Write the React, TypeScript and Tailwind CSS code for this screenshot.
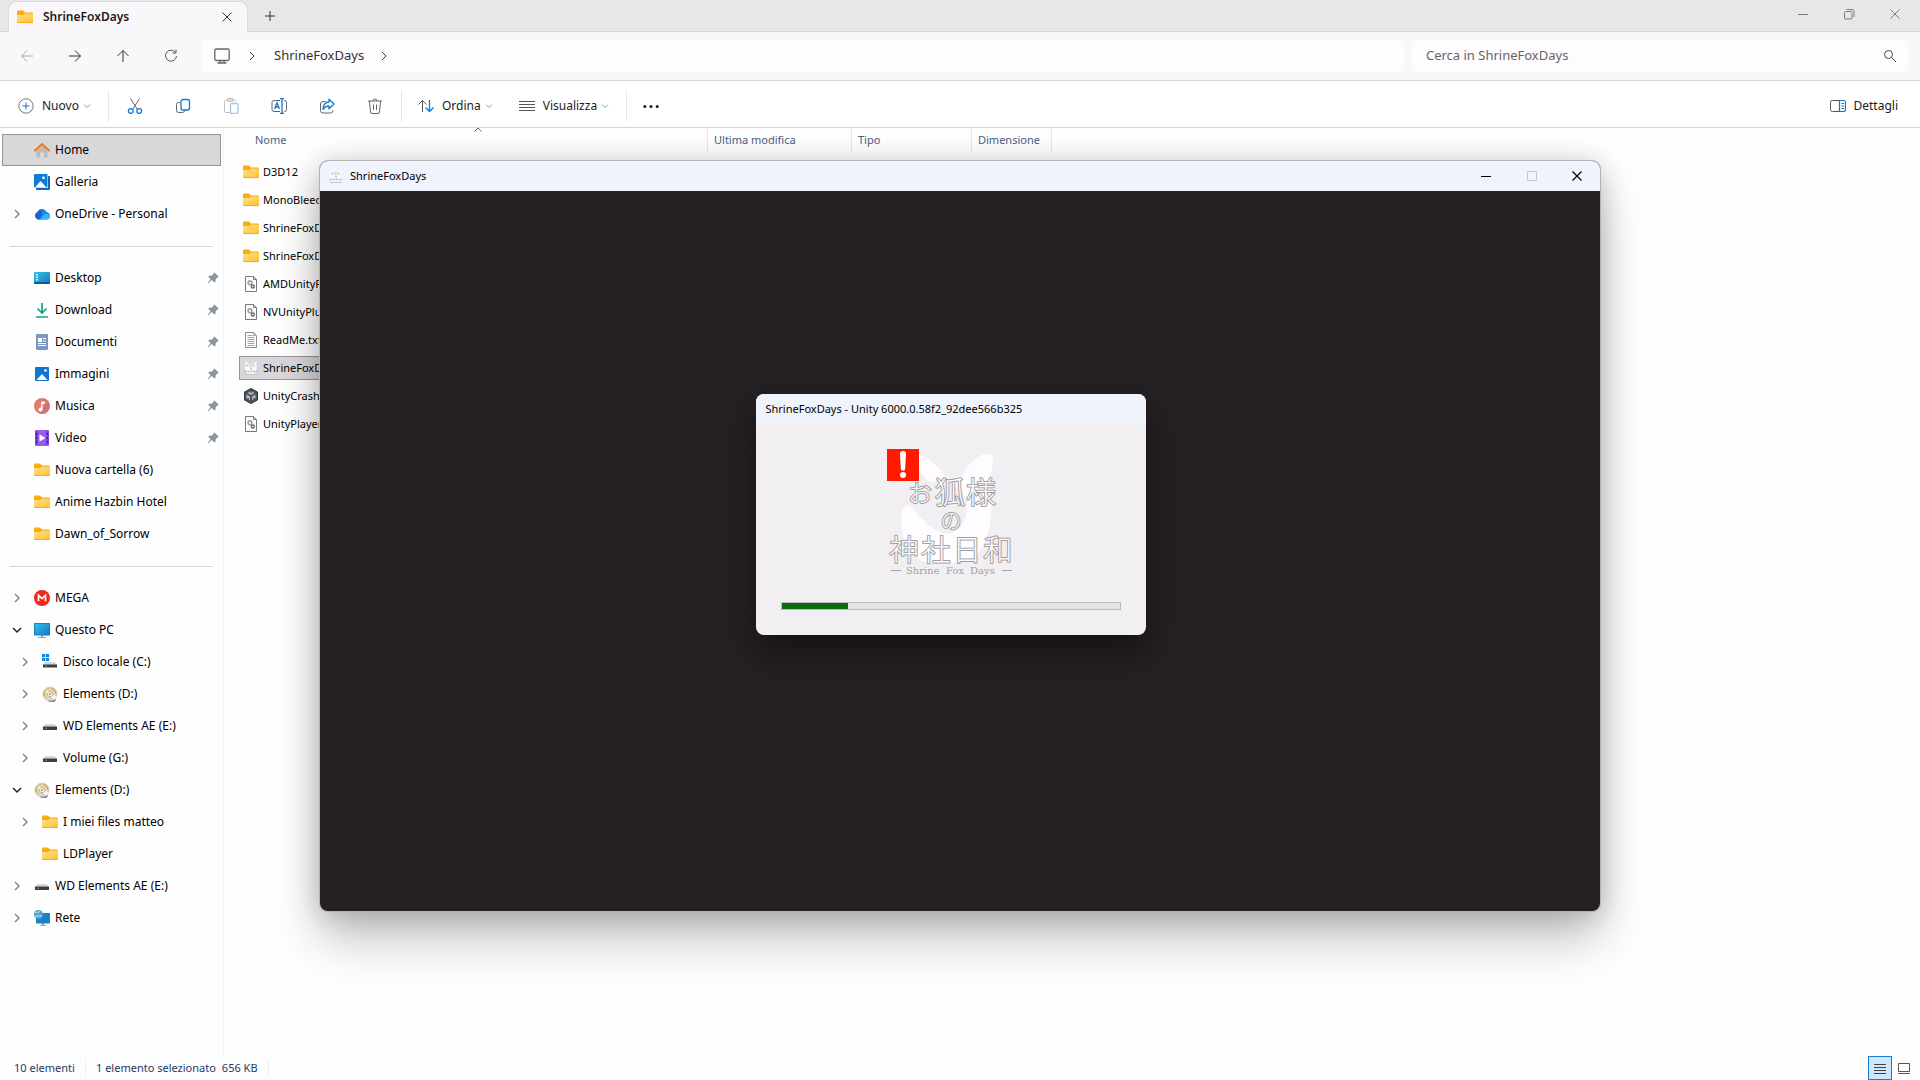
import { useState, type ReactNode } from "react";

type IconName =
  | "home" | "gallery" | "cloud" | "desktop" | "download" | "docs" | "pictures"
  | "music" | "video" | "folder" | "mega" | "pc" | "osdisk" | "disc" | "drive"
  | "network" | "dll" | "txt" | "fox" | "unity";

type NavItem = {
  label: string;
  icon: IconName;
  pinned?: boolean;
  arrow?: "right" | "down";
  nested?: boolean;
};

const navGroups: NavItem[][] = [
  [
    { label: "Home", icon: "home" },
    { label: "Galleria", icon: "gallery" },
    { label: "OneDrive - Personal", icon: "cloud", arrow: "right" },
  ],
  [
    { label: "Desktop", icon: "desktop", pinned: true },
    { label: "Download", icon: "download", pinned: true },
    { label: "Documenti", icon: "docs", pinned: true },
    { label: "Immagini", icon: "pictures", pinned: true },
    { label: "Musica", icon: "music", pinned: true },
    { label: "Video", icon: "video", pinned: true },
    { label: "Nuova cartella (6)", icon: "folder" },
    { label: "Anime Hazbin Hotel", icon: "folder" },
    { label: "Dawn_of_Sorrow", icon: "folder" },
  ],
  [
    { label: "MEGA", icon: "mega", arrow: "right" },
    { label: "Questo PC", icon: "pc", arrow: "down" },
    { label: "Disco locale (C:)", icon: "osdisk", arrow: "right", nested: true },
    { label: "Elements (D:)", icon: "disc", arrow: "right", nested: true },
    { label: "WD Elements AE (E:)", icon: "drive", arrow: "right", nested: true },
    { label: "Volume (G:)", icon: "drive", arrow: "right", nested: true },
    { label: "Elements (D:)", icon: "disc", arrow: "down" },
    { label: "I miei files matteo", icon: "folder", arrow: "right", nested: true },
    { label: "LDPlayer", icon: "folder", nested: true },
    { label: "WD Elements AE (E:)", icon: "drive", arrow: "right" },
    { label: "Rete", icon: "network", arrow: "right" },
  ],
];

const files: { name: string; icon: IconName }[] = [
  { name: "D3D12", icon: "folder" },
  { name: "MonoBleedingEdge", icon: "folder" },
  { name: "ShrineFoxDays_Burst", icon: "folder" },
  { name: "ShrineFoxDays_Data", icon: "folder" },
  { name: "AMDUnityPlugin.dll", icon: "dll" },
  { name: "NVUnityPlugin.dll", icon: "dll" },
  { name: "ReadMe.txt", icon: "txt" },
  { name: "ShrineFoxDays.exe", icon: "fox" },
  { name: "UnityCrashHandler64.exe", icon: "unity" },
  { name: "UnityPlayer.dll", icon: "dll" },
];

const glyphs: Record<IconName, ReactNode> = {
  home: (
    <>
      <path d="M2.500 7.500 8 2.500l5.500 5v7a1 1 0 0 1-1 1H10v-5H6v5H3.500a1 1 0 0 1-1-1z" fill="#bdbbbd" />
      <path d="M1 8.500 8 2l7 6.500" fill="none" stroke="#f07a1c" strokeWidth="2" strokeLinecap="round" strokeLinejoin="round" />
    </>
  ),
  gallery: (
    <>
      <path d="M14 2h1a1 1 0 0 1 1 1v12a1 1 0 0 1-1 1H3a1 1 0 0 1-1-1v-1h12z" fill="#1667b7" />
      <rect width="13.500" height="13.500" rx="1" fill="#0f7bd8" />
      <path d="M1 13.500 6.500 7l6 6.500z" fill="#fff" />
      <circle cx="9.500" cy="3.800" r="1.400" fill="#fff" />
    </>
  ),
  cloud: (
    <>
      <path d="M4 13.500A4 4 0 0 1 3.500 6 5 5 0 0 1 12.600 6a3.800 3.800 0 0 1 .2 7.500z" fill="#1a8cf0" />
      <path d="M4 13.500A4 4 0 0 1 3.500 6 5 5 0 0 1 8 3.200c1 3-1 5-1 10.300z" fill="#1663d6" />
      <path d="M5 13.500 11 8.500c2-1 5 0 5 2.300a2.800 2.800 0 0 1-3 2.700z" fill="#35b9f6" />
    </>
  ),
  desktop: (
    <>
      <rect y="2" width="16" height="12" rx="1" fill="url(#screenFill)" />
      <path d="M0 12h16v1a1 1 0 0 1-1 1H1a1 1 0 0 1-1-1z" fill="#0b5c92" />
      <path d="M2 4h2v1.500H2zM2 6.500h2V8H2zM2 9h2v1.500H2z" fill="#d5f3ff" />
    </>
  ),
  download: (
    <path d="M8 1v9.500M3.500 6.500 8 11l4.500-4.500M2 15h12" fill="none" stroke="#16a085" strokeWidth="1.700" />
  ),
  docs: (
    <>
      <rect x="2" width="12" height="16" rx="1" fill="#7b98c0" />
      <path d="M4 4h4v4H4z" fill="#fff" />
      <path d="M9 4.500h3M9 7h3M4 9.500h8M4 11.500h8" stroke="#fff" />
    </>
  ),
  pictures: (
    <>
      <rect x="1" y="1" width="14" height="14" rx="1" fill="#0f76d2" />
      <path d="M2.500 14 8 8l5.500 6z" fill="#fff" />
      <circle cx="11.500" cy="4.500" r="1.300" fill="#fff" />
    </>
  ),
  music: (
    <>
      <circle cx="8" cy="8" r="8" fill="#df7c66" />
      <path d="M14 3a8 8 0 0 1-9 12.500z" fill="#c06f8d" opacity=".6" />
      <path d="M7.200 3.500v6.200a2 2 0 1 0 1.400 1.900V6h2.200V3.500z" fill="#fff" />
    </>
  ),
  video: (
    <>
      <rect x="1" width="14" height="16" rx="1" fill="#9a5cf0" />
      <path d="M1 1h3v14H1zM12 1h3v14h-3z" fill="#7f3fe0" />
      <path d="M2 3h1.300v1.500H2zM2 7h1.300v1.500H2zM2 11h1.300v1.500H2zM12.700 3H14v1.500h-1.300zM12.700 7H14v1.500h-1.300zM12.700 11H14v1.500h-1.300z" fill="#3b1a78" />
      <path d="M5.500 4.500v7L11.500 8z" fill="#fff" />
    </>
  ),
  folder: (
    <>
      <path d="M0 2.500a1 1 0 0 1 1-1h5L8 3.500h7a1 1 0 0 1 1 1V7H0z" fill="#fbab0b" />
      <path d="M0 6h6.500L8 4.500h7a1 1 0 0 1 1 1V13a1 1 0 0 1-1 1H1a1 1 0 0 1-1-1z" fill="url(#folderFill)" />
      <path d="M.3 13.600h15.400" stroke="#eda313" strokeWidth=".8" />
    </>
  ),
  mega: (
    <>
      <circle cx="8" cy="8" r="8" fill="#f0251c" />
      <path d="M4.500 11.200V5.200L8 8.500l3.500-3.300v6" fill="none" stroke="#fff" strokeWidth="1.700" />
    </>
  ),
  pc: (
    <>
      <path d="M7 13h2v2.500H7z" fill="#9aa4ac" />
      <path d="M4 15.500h8" stroke="#9aa4ac" />
      <rect y="1" width="16" height="12.500" rx="1" fill="#1474b4" />
      <rect x=".8" y="1.800" width="14.400" height="11" fill="url(#screenFill)" />
    </>
  ),
  osdisk: (
    <>
      <path d="M3 8h10l2 3H1z" fill="#d8d8d8" />
      <path d="M1 10.500h14v3H1z" fill="#3d4043" />
      <circle cx="4" cy="12" r=".7" fill="#3ee05a" />
      <path d="M0 0h3.200v3.200H0zM3.900 0h3.200v3.200H3.900zM0 3.900h3.200v3.200H0zM3.900 3.900h3.200v3.200H3.900z" fill="#0f88e0" />
    </>
  ),
  disc: (
    <>
      <path d="M5 13h8l1 1.500-2 1.500H7z" fill="#85888b" />
      <circle cx="8" cy="8" r="7" fill="#d5d4d0" stroke="#b9b6ac" strokeWidth=".6" />
      <path d="M8 8 1.500 6a7 7 0 0 1 4-4.500zM8 8l6.500 2a7 7 0 0 1-3 4z" fill="#f8f8f5" />
      <path d="M2.500 10.500A6 6 0 0 1 7 2.500M9.500 2.500a6 6 0 0 1 4.500 5" fill="none" stroke="#e2b13a" strokeWidth="1.600" />
      <circle cx="8" cy="8" r="2.600" fill="#fff" stroke="#d3a63a" strokeWidth=".8" />
      <circle cx="8" cy="8" r="1.100" fill="#8c9096" />
    </>
  ),
  drive: (
    <>
      <path d="M3.500 6h9L15 9H1z" fill="#d8d8d8" />
      <path d="M1 8.500h14v3.500H1z" fill="#3d4043" />
      <circle cx="4" cy="10.300" r=".7" fill="#3ee05a" />
    </>
  ),
  network: (
    <>
      <path d="M8 13h2v2.500H8zM6 15h6v1H6z" fill="#9aa4ac" />
      <rect x="2" y="3" width="14" height="10.500" rx="1" fill="#1883c8" />
      <circle cx="4.500" cy="4.500" r="4.500" fill="#4ea4cd" />
      <path d="M1 3c2-2 3 1 5-2M1 6c3 1 4-1 7 0" stroke="#c9eaf5" fill="none" />
    </>
  ),
  dll: (
    <>
      <path d="M2.500.5h8l3 3v12h-11z" fill="#fff" stroke="#77797b" />
      <path d="M10.500.5v3h3" fill="none" stroke="#77797b" />
      <circle cx="7" cy="6.800" r="1.900" fill="none" stroke="#9aa0a8" strokeWidth="1.600" />
      <circle cx="9.800" cy="10.500" r="1.500" fill="none" stroke="#5d6d82" strokeWidth="1.400" />
    </>
  ),
  txt: (
    <>
      <path d="M2.500.5h8l3 3v12h-11z" fill="#fff" stroke="#8c8e90" />
      <path d="M10.500.5v3h3M4.500 3.500h5M4.500 5.500h7M4.500 7.500h7M4.500 9.500h7M4.500 11.500h7M4.500 13.500h7" fill="none" stroke="#a2a4a6" />
    </>
  ),
  fox: (
    <>
      <path d="M2.500 1 6 4h4l3.500-3v8L12 14H4L2 9z" fill="#f9f8fa" />
      <path d="M3.500 5.500h9M7 8.500h2M1.500 11.500h13" stroke="#bab8bd" strokeWidth="2" strokeDasharray="2 1" opacity=".8" />
      <path d="M2 14.500h12" stroke="#c6c4c8" />
    </>
  ),
  unity: (
    <>
      <path d="M8 .5 14.500 4v8L8 15.500 1.500 12V4z" fill="#4b505a" stroke="#33363e" />
      <path d="M8 3 11.500 5 8 7 4.500 5zM3.500 6.500 7 8.500v4l-3.500-2zM12.500 6.500 9 8.500v4l3.500-2z" fill="#b5bac3" />
      <path d="M8 2v3M5 10v2M11 10v2" stroke="#33363e" />
    </>
  ),
};

function Glyph({ name }: { name: IconName }) {
  return (
    <svg viewBox="0 0 16 16" className="size-4 shrink-0" aria-hidden="true">
      {glyphs[name]}
    </svg>
  );
}

function Line({ d, className = "", size = 16 }: { d: string; className?: string; size?: number }) {
  return (
    <svg
      viewBox="0 0 16 16"
      width={size}
      height={size}
      fill="none"
      stroke="currentColor"
      className={`shrink-0 ${className}`}
      aria-hidden="true"
    >
      <path d={d} />
    </svg>
  );
}

const CHEVRON_RIGHT = "M6 4l4 4-4 4";
const CLOSE = "M3.500 3.500l9 9M12.500 3.500l-9 9";

function TabBar() {
  return (
    <header className="flex h-8 items-stretch border-b border-[#d6d4d7] bg-[#e8e6e9]">
      <div className="z-10 -mb-px ml-2 mt-px flex w-60 items-center rounded-t-lg border border-b-0 border-[#dcdadd] bg-[#f9f7fa] pl-2 pr-3">
        <Glyph name="folder" />
        <span className="ml-2.5 flex-1 text-xs font-semibold text-[#1b1b1b]">ShrineFoxDays</span>
        <button aria-label="Chiudi scheda" className="text-[#333]">
          <Line d={CLOSE} />
        </button>
      </div>
      <button aria-label="Nuova scheda" className="ml-3.5 text-[#333]">
        <Line d="M8 3v10M3 8h10" />
      </button>
      <div className="ml-auto flex h-7 items-center pr-0.5 text-[#7d7b7e]">
        <button aria-label="Riduci a icona" className="flex w-[46px] justify-center">
          <Line d="M3 8.500h10" />
        </button>
        <button aria-label="Ripristina" className="flex w-[46px] justify-center">
          <svg viewBox="0 0 16 16" className="size-4" fill="none" stroke="currentColor">
            <rect x="3.500" y="5.500" width="7.500" height="7.500" rx="1" />
            <path d="M5.500 3.500h5.500a2 2 0 0 1 2 2v5.500" />
          </svg>
        </button>
        <button aria-label="Chiudi" className="flex w-[46px] justify-center">
          <Line d={CLOSE} />
        </button>
      </div>
    </header>
  );
}

function AddressRow() {
  return (
    <div className="flex h-[49px] items-center border-b border-[#d6d4d7] bg-[#f9f7fa] pr-3 text-[#333]">
      <nav className="flex w-[201px] shrink-0 items-center pl-[3px]">
        <button aria-label="Indietro" className="flex w-12 justify-center text-[#aaa8ab]">
          <Line d="M14 8H2.500M8 2.500 2.500 8 8 13.500" />
        </button>
        <button aria-label="Avanti" className="flex w-12 justify-center">
          <Line d="M2 8h11.500M8 2.500l5.500 5.500L8 13.500" />
        </button>
        <button aria-label="Su" className="flex w-12 justify-center">
          <Line d="M8 14V2.500M2.500 8 8 2.500l5.500 5.500" />
        </button>
        <button aria-label="Aggiorna" className="flex w-12 justify-center text-[#555]">
          <Line d="M12.500 4.500A5.500 5.500 0 1 0 13.500 8M13 1.500v3.500H9.500" />
        </button>
      </nav>
      <div className="flex h-8 min-w-0 flex-1 items-center rounded-md bg-[#fefcff] pl-[13px]">
        <svg viewBox="0 0 16 16" className="size-4" fill="none" stroke="#666" strokeWidth="1.300">
          <rect x=".8" y="1" width="14.400" height="11.500" rx="1.500" />
          <path d="M6 12.500v2M10 12.500v2M3.500 15h9" />
        </svg>
        <Line d={CHEVRON_RIGHT} className="mx-3.5" />
        <a href="#" className="text-[13px] text-[#333]">ShrineFoxDays</a>
        <Line d={CHEVRON_RIGHT} className="ml-3" />
      </div>
      <label className="ml-2 flex h-8 w-[26%] items-center rounded-md bg-[#fefcff] pl-3.5 pr-2.5">
        <input
          type="search"
          aria-label="Cerca in ShrineFoxDays"
          placeholder="Cerca in ShrineFoxDays"
          className="min-w-0 flex-1 bg-transparent text-[13px] outline-none placeholder:text-[#66646a]"
        />
        <Line d="M10.500 6.500a4 4 0 1 1-8 0 4 4 0 0 1 8 0M9.500 9.500l4.500 4.500" className="text-[#444]" />
      </label>
    </div>
  );
}

function Separator() {
  return <span className="h-8 w-px shrink-0 bg-[#e9e9e9]" />;
}

function IconButton({ label, children, faded }: { label: string; children: ReactNode; faded?: boolean }) {
  return (
    <button aria-label={label} disabled={faded} className={`flex w-12 justify-center ${faded ? "opacity-40" : ""}`}>
      <svg viewBox="0 0 16 16" className="size-4" fill="none" stroke="#666">
        {children}
      </svg>
    </button>
  );
}

function MenuButton({ label, children }: { label: string; children: ReactNode }) {
  return (
    <button className="flex items-center text-xs text-[#1b1b1b]">
      <svg viewBox="0 0 16 16" className="mr-2 size-4" fill="none" stroke="#555">
        {children}
      </svg>
      {label}
      <Line d="M5 6.500l3 3 3-3" className="text-[#999]" />
    </button>
  );
}

function CommandBar() {
  return (
    <div className="flex h-[47px] items-center border-b border-[#d6d4d7] bg-white pr-[22px] pt-[3px]">
      <div className="flex w-[108px] items-center pl-[18px]">
        <MenuButton label="Nuovo">
          <circle cx="8" cy="8" r="7.200" stroke="#777" />
          <path d="M8 4.500v7M4.500 8h7" stroke="#0f78d4" />
        </MenuButton>
      </div>
      <Separator />
      <div className="flex w-[292px] items-center pl-0.5">
        <IconButton label="Taglia">
          <path d="M3.500.5 10.500 11.500M12.500.5 5.500 11.500" />
          <circle cx="3.800" cy="13" r="2.400" stroke="#0f78d4" strokeWidth="1.300" />
          <circle cx="12.200" cy="13" r="2.400" stroke="#0f78d4" strokeWidth="1.300" />
        </IconButton>
        <IconButton label="Copia">
          <path d="M5 4.500H3.500a2 2 0 0 0-2 2v6a2 2 0 0 0 2 2h4a2 2 0 0 0 2-2" />
          <rect x="6" y="1.500" width="8.500" height="10.500" rx="2" stroke="#0f78d4" strokeWidth="1.300" />
        </IconButton>
        <IconButton label="Incolla" faded>
          <path d="M7 14.500H3a1.500 1.500 0 0 1-1.500-1.500V3.500A1.500 1.500 0 0 1 3 2h8.500A1.500 1.500 0 0 1 13 3.500M4.500.5h5.500v3H4.500z" />
          <rect x="7.500" y="5.500" width="7.500" height="10" rx="1" stroke="#0f78d4" strokeWidth="1.300" />
        </IconButton>
        <IconButton label="Rinomina">
          <path d="M9 2.500H3a2 2 0 0 0-2 2v7a2 2 0 0 0 2 2h6M13 2.500h.5a2 2 0 0 1 2 2v7a2 2 0 0 1-2 2H13" />
          <path d="M11 .5v15M9 .5h4M9 15.500h4M3.500 11 6 4.800 8.500 11M4.200 9h3.600" stroke="#0f78d4" strokeWidth="1.300" />
        </IconButton>
        <IconButton label="Condividi">
          <path d="M6.500 3.500H4a2.500 2.500 0 0 0-2.500 2.500v6.500A2.500 2.500 0 0 0 4 15h7.500a2.500 2.500 0 0 0 2.500-2.500V12" />
          <path d="M10 1.200 15 6l-5 4.700V8C7 8 5.500 9 4 11.500 4.200 7.500 6 4.200 10 4z" stroke="#0f78d4" strokeWidth="1.300" strokeLinejoin="round" />
        </IconButton>
        <IconButton label="Elimina">
          <path d="M1 3h14M6 3a2 2 0 0 1 4 0M2.500 3l1 11a1.500 1.500 0 0 0 1.500 1.500h6a1.500 1.500 0 0 0 1.500-1.500l1-11M6.500 6.500v5.500M9.500 6.500v5.500" />
        </IconButton>
      </div>
      <Separator />
      <div className="flex w-[224px] items-center gap-[22px] pl-4">
        <MenuButton label="Ordina">
          <path d="M4.500 14V2.500M.5 6.500l4-4 4 4" />
          <path d="M11.500 2v11.500M7.500 9.500l4 4 4-4" stroke="#0f78d4" strokeWidth="1.300" />
        </MenuButton>
        <MenuButton label="Visualizza">
          <path d="M0 3.500h16M0 6.500h16M0 9.500h16M0 12.500h16" />
        </MenuButton>
      </div>
      <Separator />
      <button aria-label="Altro" className="ml-4">
        <svg viewBox="0 0 16 16" className="size-4" fill="#1b1b1b">
          <circle cx="1.800" cy="8.500" r="1.500" />
          <circle cx="8" cy="8.500" r="1.500" />
          <circle cx="14.200" cy="8.500" r="1.500" />
        </svg>
      </button>
      <button className="ml-auto flex items-center gap-2 text-xs text-[#1b1b1b]">
        <svg viewBox="0 0 16 16" className="size-4" fill="none" stroke="#555">
          <path d="M9.500 2.500H2.500a2 2 0 0 0-2 2v7a2 2 0 0 0 2 2h7" />
          <path d="M9.500 2.500h4a2 2 0 0 1 2 2v7a2 2 0 0 1-2 2h-4zM11.500 5.500h2.500M11.500 8h2.500M11.500 10.500h2.500" stroke="#0f78d4" strokeWidth="1.200" />
        </svg>
        Dettagli
      </button>
    </div>
  );
}

function Sidebar() {
  return (
    <aside className="w-56 shrink-0 border-r border-[#f3f2f4] px-0.5 pt-1.5">
      {navGroups.map((group, g) => (
        <div key={g}>
          {g > 0 && (
            <div className="flex h-8 items-center px-2">
              <hr className="w-full border-[#d6d4d7]" />
            </div>
          )}
          {group.map((item, i) => {
            const current = item.icon === "home";
            return (
              <a
                key={i}
                href="#"
                className={`flex h-8 items-center border text-xs text-black ${
                  current ? "border-[#969496] bg-[#d9d7da]" : "border-transparent"
                } ${item.nested ? "pl-3.5" : "pl-1.5"}`}
              >
                <span className="mr-[9px] flex w-4 justify-center">
                  {item.arrow === "right" && (
                    <Line d={CHEVRON_RIGHT} className="text-[#8a888b] [stroke-width:1.500]" />
                  )}
                  {item.arrow === "down" && (
                    <Line d="M4 6l4 4 4-4" className="text-[#222] [stroke-width:1.500]" />
                  )}
                </span>
                <Glyph name={item.icon} />
                <span className="ml-[5px] flex-1 whitespace-nowrap">{item.label}</span>
                {item.pinned && (
                  <svg viewBox="0 0 12 12" className="mr-px size-3" fill="#8b94a1">
                    <path d="M7.500.5 11.500 4.500 10.500 5.500 8.800 7 8.500 9.800 7.500 10.500 4.800 8 1 11.500.5 11 3.500 7.200 1.300 4.800 2 3.800 5 3.500 6.500 1.500z" />
                  </svg>
                )}
              </a>
            );
          })}
        </div>
      ))}
    </aside>
  );
}

function FileList() {
  const [selected, setSelected] = useState("ShrineFoxDays.exe");
  const columns = [
    { label: "Nome", width: "w-[469px]", pad: "pl-4" },
    { label: "Ultima modifica", width: "w-36", pad: "pl-1.5" },
    { label: "Tipo", width: "w-[120px]", pad: "pl-1.5" },
    { label: "Dimensione", width: "w-20", pad: "pl-1.5" },
  ];

  return (
    <main className="min-w-0 flex-1 overflow-hidden pl-[15px]">
      <table className="table-fixed border-collapse text-[11px]">
        <thead>
          <tr>
            {columns.map((c, i) => (
              <th key={c.label} className={`h-8 p-0 align-top font-normal ${c.width}`}>
                <div className={`relative flex h-[25px] items-center whitespace-nowrap border-r border-[#e6e4e7] text-[#4c5d80] ${c.pad}`}>
                  {c.label}
                  {i === 0 && (
                    <Line d="M4.500 9.500 8 6l3.500 3.500" className="absolute -top-1.5 left-[231px] text-[#666]" />
                  )}
                </div>
              </th>
            ))}
          </tr>
        </thead>
        <tbody>
          {files.map((f) => (
            <tr key={f.name} onClick={() => setSelected(f.name)}>
              <td colSpan={4} className="h-7 p-0 align-top">
                <div
                  className={`flex h-6 items-center gap-1 border pl-[3px] text-black ${
                    f.name === selected ? "border-[#969496] bg-[#d9d7da]" : "border-transparent"
                  }`}
                >
                  <Glyph name={f.icon} />
                  {f.name}
                </div>
              </td>
            </tr>
          ))}
        </tbody>
      </table>
    </main>
  );
}

function StatusBar() {
  return (
    <footer className="flex h-6 items-center bg-[#fdfdfd] pl-3.5 text-[11px] text-[#1f3a68]">
      <span className="w-[72px] whitespace-nowrap border-r border-[#efeef0]">10 elementi</span>
      <span className="whitespace-nowrap pl-2.5">1 elemento selezionato</span>
      <span className="whitespace-nowrap border-r border-[#efeef0] pl-1.5 pr-2.5">656 KB</span>
      <div className="ml-auto flex items-center">
        <button aria-label="Dettagli" className="flex size-6 items-center justify-center border border-[#1a7fd0] bg-[#cce6fb]">
          <Line d="M2 4.500h12M2 7.500h12M2 10.500h12M2 13.500h12" className="text-[#444]" />
        </button>
        <button aria-label="Icone grandi" className="flex h-6 w-7 items-center pl-1">
          <svg viewBox="0 0 16 16" className="size-4" fill="none" stroke="#555">
            <path d="M2.500 3.500h11v8h-11zM2 13.500h12" />
          </svg>
        </button>
      </div>
    </footer>
  );
}

function GameLogo() {
  return (
    <svg viewBox="0 0 128 128" className="size-32 overflow-visible">
      <path
        d="M75 28C80 16 90 6 99 5c6-1 8 4 7 9-1 8-4 14-4 20 5 26 3 56-14 74-18 8-38 8-54 4C20 102 12 84 15 64c1-8 7-10 11-4 10 12 24 25 36 25 14-3 20-19 17-35-3-10-19-20-29-18-6 4-14-2-18-12V5c12 5 22 15 28 25 6-1 10-2 15-2z"
        fill="#fefcff"
      />
      <g
        fill="#fdfcfd"
        stroke="#a09ea1"
        strokeWidth="2"
        strokeLinejoin="round"
        paintOrder="stroke"
        textAnchor="middle"
        fontFamily="'Noto Sans CJK JP', sans-serif"
        fontWeight="300"
      >
        <text x="33" y="53" fontSize="24">お</text>
        <text x="63" y="54" fontSize="30">狐</text>
        <text x="94" y="54" fontSize="30">様</text>
        <text x="64" y="79" fontSize="21">の</text>
        <text x="17" y="112" fontSize="29">神</text>
        <text x="49" y="112" fontSize="29">社</text>
        <text x="80" y="112" fontSize="29">日</text>
        <text x="111" y="112" fontSize="29">和</text>
      </g>
      <text
        y="125"
        fontFamily="'DejaVu Serif', serif"
        fontSize="10"
        fill="#a3a1a4"
      >
        <tspan x="19">Shrine</tspan> <tspan x="59">Fox</tspan> <tspan x="83">Days</tspan>
      </text>
      <path d="M4 121.500h10M115 121.500h10" stroke="#a3a1a4" />
    </svg>
  );
}

function LoadingDialog() {
  return (
    <section
      role="dialog"
      aria-labelledby="loading-title"
      className="absolute left-[34.1%] top-[203px] w-[390px] overflow-hidden rounded-lg bg-[#f1eff2] shadow-[0_16px_36px_rgba(0,0,0,0.45)]"
    >
      <h2 id="loading-title" className="flex h-[30px] items-center bg-[#eff3fc] pl-[9px] text-[11px] text-black">
        ShrineFoxDays - Unity 6000.0.58f2_92dee566b325
      </h2>
      <div className="flex flex-col items-center px-[25px] pb-[25px] pt-[25px]">
        <div className="relative">
          <GameLogo />
          <svg viewBox="0 0 32 32" className="absolute left-0 top-0 size-8">
            <path d="M0 0h32v32H0z" fill="#ff1a00" />
            <path d="M13 5a3 3 0 0 1 6 0l-.8 14.500a2.200 2.200 0 0 1-4.400 0z" fill="#fff" />
            <circle cx="16" cy="26" r="3" fill="#fff" />
          </svg>
        </div>
        <div
          role="progressbar"
          aria-label="Caricamento"
          aria-valuenow={20}
          className="mt-[25px] h-2 w-full border border-[#bcbabd] bg-[#e6e4e7]"
        >
          <div className="h-full w-[19.5%] bg-[#0b6c10]" />
        </div>
      </div>
    </section>
  );
}

function GameWindow() {
  return (
    <section
      aria-label="ShrineFoxDays"
      className="absolute inset-x-80 top-[161px] rounded-lg bg-[#252023] shadow-[0_28px_48px_rgba(0,0,0,0.24),0_2px_28px_rgba(0,0,0,0.2)] ring-1 ring-[#b3b1b4]"
    >
      <div className="flex h-[30px] items-center rounded-t-lg bg-[#eff3fc] pl-2 text-[11px] text-black">
        <Glyph name="fox" />
        <span className="ml-1.5 flex-1">ShrineFoxDays</span>
        <button aria-label="Riduci a icona" className="flex w-[46px] justify-center">
          <Line d="M3 8.500h10" />
        </button>
        <button aria-label="Ingrandisci" disabled className="flex w-[45px] justify-center text-[#c3c5cf]">
          <Line d="M3.500 3.500h9v9h-9z" />
        </button>
        <button aria-label="Chiudi" className="flex w-[46px] justify-center">
          <Line d={CLOSE} className="[stroke-width:1.200]" />
        </button>
      </div>
      <div className="relative aspect-video">
        <LoadingDialog />
      </div>
    </section>
  );
}

export default function App() {
  return (
    <div className="relative flex h-screen flex-col overflow-hidden bg-[#fefefe] font-['Noto_Sans','Noto_Sans_CJK_JP',sans-serif]">
      <svg className="absolute size-0" aria-hidden="true">
        <defs>
          <linearGradient id="folderFill" x1="0" y1="0" x2="1" y2="1">
            <stop offset="0" stopColor="#ffe08a" />
            <stop offset="1" stopColor="#fdc234" />
          </linearGradient>
          <linearGradient id="screenFill" x1="0" y1="0" x2="1" y2="1">
            <stop offset="0" stopColor="#35c1ea" />
            <stop offset="1" stopColor="#1478c4" />
          </linearGradient>
        </defs>
      </svg>
      <TabBar />
      <AddressRow />
      <CommandBar />
      <div className="flex min-h-0 flex-1">
        <Sidebar />
        <FileList />
      </div>
      <StatusBar />
      <GameWindow />
    </div>
  );
}
